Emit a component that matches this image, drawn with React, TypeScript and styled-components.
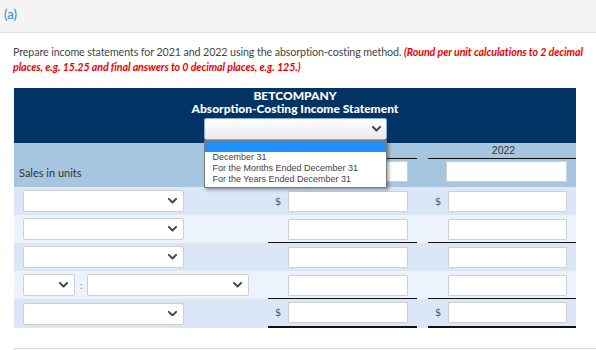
import React from "react";
import styled, {createGlobalStyle, css} from "styled-components";

const GlobalStyle = createGlobalStyle`
    html, body {
        margin: 0;
        padding: 0;
        background: #ffffff;
        font-family: Lato, "Open Sans", sans-serif;
    }
`

const Chevron = ({size = 9}: {size?: number}) => (
    <svg width={size} height={size * 0.6} viewBox="0 0 10 6">
        <path d="M1 1 L5 5 L9 1" fill="none" stroke="#444" strokeWidth="2.2" strokeLinecap="round" strokeLinejoin="round"/>
    </svg>
)

type RowSpec = {
    shade: "dark" | "light";
    split?: boolean;
    dollar?: boolean;
    top?: boolean;
    bottom?: boolean;
}

const rows: RowSpec[] = [
    {shade: "dark", dollar: true},
    {shade: "light"},
    {shade: "dark", top: true},
    {shade: "light", split: true},
    {shade: "dark", dollar: true, top: true, bottom: true},
]

export default function App() {
    return (
        <Page>
            <GlobalStyle/>
            <TopBar>(a)</TopBar>
            <Instructions>
                Prepare income statements for 2021 and 2022 using the absorption-costing method.{" "}
                <em>(Round per unit calculations to 2 decimal places, e.g. 15.25 and final answers to 0 decimal places, e.g. 125.)</em>
            </Instructions>
            <Sheet>
                <Title>
                    <div>BETCOMPANY</div>
                    <div>Absorption-Costing Income Statement</div>
                    <DateSelect>
                        <span/>
                        <Chevron/>
                        <OptionList>
                            <Option $active/>
                            <Option>December 31</Option>
                            <Option>For the Months Ended December 31</Option>
                            <Option>For the Years Ended December 31</Option>
                        </OptionList>
                    </DateSelect>
                </Title>
                <HeadRow>
                    <HeadLabel>Sales in units</HeadLabel>
                    <YearCell>
                        <YearName>2021</YearName>
                        <InputLine><Amount/></InputLine>
                    </YearCell>
                    <div/>
                    <YearCell>
                        <YearName>2022</YearName>
                        <InputLine><Amount/></InputLine>
                    </YearCell>
                </HeadRow>
                {rows.map((r, i) => (
                    <Row key={i} $shade={r.shade}>
                        <LabelCell>
                            {r.split ? (
                                <>
                                    <Picker $width={52}><Chevron/></Picker>
                                    <Colon>:</Colon>
                                    <Picker $width={162}><Chevron/></Picker>
                                </>
                            ) : (
                                <Picker $width={161}><Chevron/></Picker>
                            )}
                        </LabelCell>
                        <ValueCell $top={r.top} $bottom={r.bottom}>
                            <Dollar>{r.dollar ? "$" : ""}</Dollar>
                            <Amount/>
                        </ValueCell>
                        <div/>
                        <ValueCell $top={r.top} $bottom={r.bottom}>
                            <Dollar>{r.dollar ? "$" : ""}</Dollar>
                            <Amount/>
                        </ValueCell>
                    </Row>
                ))}
            </Sheet>
            <NextPanel/>
        </Page>
    )
}

const Page = styled.div`
    width: 596px;
    height: 350px;
    overflow: hidden;
`

const TopBar = styled.div`
    height: 33px;
    box-sizing: border-box;
    padding: 6px 0 0 4px;
    background: #f4f4f4;
    border-bottom: 1px solid #dcdcdc;
    color: #2b8ad3;
    font-size: 13px;
`

const Instructions = styled.p`
    margin: 11px 12px 0 13px;
    font-size: 10.7px;
    line-height: 15px;
    color: #444;
    letter-spacing: -0.1px;

    & > em {
        color: #ee0000;
        font-weight: bold;
        font-style: italic;
    }
`

const Sheet = styled.div`
    width: 562px;
    margin: 14px 0 0 14px;
`

const Title = styled.div`
    position: relative;
    height: 55px;
    box-sizing: border-box;
    padding-top: 1px;
    background: #013365;
    color: #ffffff;
    font-weight: 900;
    font-size: 12px;
    line-height: 13px;
    text-align: center;
    display: flex;
    flex-direction: column;
    align-items: center;
`

const DateSelect = styled.div`
    position: relative;
    width: 183px;
    height: 22px;
    box-sizing: border-box;
    margin-top: 3px;
    border: 1px solid #7fb0e0;
    border-radius: 2px;
    background: linear-gradient(#ffffff, #e9e9e9);
    display: flex;
    align-items: center;
    justify-content: space-between;
    padding: 0 5px 0 4px;
`

const OptionList = styled.div`
    position: absolute;
    left: -1px;
    top: 21px;
    width: 183px;
    box-sizing: border-box;
    border: 1px solid #7a7a7a;
    background: #ffffff;
    box-shadow: 2px 2px 3px rgba(0, 0, 0, 0.35);
    text-align: left;
    z-index: 5;
    padding-bottom: 2px;
`

const Option = styled.div<{ $active?: boolean }>`
    height: 11px;
    line-height: 11px;
    padding-left: 8px;
    font-family: "Liberation Sans", Arial, sans-serif;
    font-weight: normal;
    font-size: 9px;
    color: #4a4040;
    ${p => p.$active && css`
        background: #1e90ff;
    `}
`

const grid = css`
    display: grid;
    grid-template-columns: 254px 149px 11px 148px;
`

const HeadRow = styled.div`
    ${grid};
    height: 44px;
    background: #a6c6e0;
`

const HeadLabel = styled.div`
    align-self: end;
    padding: 0 0 8px 5px;
    font-size: 11px;
    color: #333;
`

const YearCell = styled.div`
    display: flex;
    flex-direction: column;
`

const YearName = styled.div`
    height: 15px;
    border-bottom: 1px solid #111;
    text-align: center;
    font-family: "Liberation Sans", Arial, sans-serif;
    font-size: 10.5px;
    line-height: 15px;
    color: #333;
    padding-left: 3px;
`

const InputLine = styled.div`
    display: flex;
    justify-content: flex-end;
    padding: 2px 9px 0 0;
`

const Row = styled.div<{ $shade: "dark" | "light" }>`
    ${grid};
    background: ${p => p.$shade === "dark" ? "#dbe7f7" : "#ecf3fd"};
`

const LabelCell = styled.div`
    display: flex;
    align-items: center;
    padding: 3px 0 3px 9px;
`

const Picker = styled.div<{ $width: number }>`
    width: ${p => p.$width}px;
    height: 22px;
    box-sizing: border-box;
    border: 1px solid #cfcfcf;
    border-radius: 2px;
    background: #ffffff;
    display: flex;
    align-items: center;
    justify-content: flex-end;
    padding-right: 6px;
`

const Colon = styled.span`
    width: 12px;
    text-align: center;
    font-size: 9px;
    color: #777;
`

const ValueCell = styled.div<{ $top?: boolean; $bottom?: boolean }>`
    display: flex;
    align-items: center;
    padding: 3px 9px 3px 7px;
    border-top: 1px solid ${p => p.$top ? "#111" : "transparent"};
    border-bottom: ${p => p.$bottom ? "2px solid #111" : "0"};
    margin-top: ${p => p.$top ? "-1px" : "0"};
`

const Dollar = styled.span`
    width: 13px;
    font-family: "DejaVu Sans", sans-serif;
    font-size: 10px;
    color: #555;
`

const Amount = styled.div`
    width: 121px;
    height: 21px;
    margin-left: auto;
    box-sizing: border-box;
    border: 1px solid #cfcfcf;
    border-radius: 1px;
    background: #ffffff;
`

const NextPanel = styled.div`
    margin: 20px 0 0 14px;
    height: 30px;
    border: 1px solid #dddddd;
    border-right: 0;
    background: #f7f7f7;
`
